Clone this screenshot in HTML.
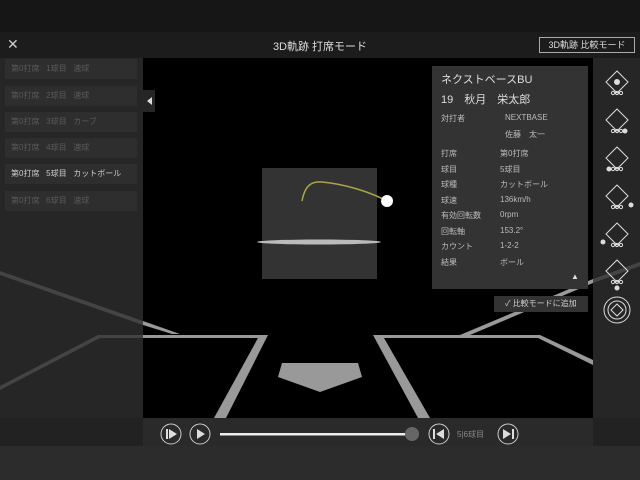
<!DOCTYPE html>
<html><head><meta charset="utf-8"><style>
*{margin:0;padding:0;box-sizing:border-box}
body{width:640px;height:480px;overflow:hidden;background:#222;font-family:"Liberation Sans","Noto Sans CJK JP",sans-serif;position:relative}
.abs{position:absolute}
.item{position:absolute;left:5px;width:132px;height:20px;background:#2e2e2e;color:#5a5a5a;font-size:8px;line-height:20px;padding-left:6px;white-space:pre}
.info div{position:absolute;font-size:8px;color:#bbb}
</style></head><body>
<div class="abs" style="left:0;top:0;width:640px;height:32px;background:#161616"></div>
<div class="abs" style="left:0;top:32px;width:640px;height:26px;background:#1c1c1c"></div>
<div class="abs" style="left:7px;top:36px;color:#ccc;font-size:14px">✕</div>
<div class="abs" style="left:0;top:38px;width:640px;text-align:center;color:#ddd;font-size:11px">3D軌跡 打席モード</div>
<div class="abs" style="left:539px;top:37px;width:96px;height:16px;border:1px solid #aaa;color:#ddd;font-size:9px;text-align:center;line-height:14px">3D軌跡 比較モード</div>
<div class="abs" style="left:0;top:58px;width:143px;height:360px;background:#262626"></div>
<div class="abs" style="left:143px;top:58px;width:450px;height:360px;background:#000"></div>
<div class="abs" style="left:593px;top:58px;width:47px;height:360px;background:#262626"></div>
<svg class="abs" style="left:0;top:0" width="640" height="480">
<polygon points="0,271 143,321 143,325 0,275" fill="#444"/>
<polygon points="143,321 180,334 172,334 143,325" fill="#999"/>
<polygon points="0,386 98,335 143,335 143,338 100,338 0,390" fill="#444"/>
<polygon points="143,335 268,335 226,418 214,418 258,338 143,338" fill="#999"/>
<polygon points="373,335 540,335 593,360 593,365 538,338 384,338 430,418 418,418" fill="#999"/>
<polygon points="460,335 593,279 593,283 470,335" fill="#999"/>
<polygon points="593,279 640,262 640,266 593,283" fill="#444"/>
<polygon points="282,363 358,363 362,377 320,392 278,377" fill="#999"/>
<rect x="262" y="168" width="115" height="111" fill="#333"/>
<ellipse cx="319" cy="242" rx="62" ry="2.5" fill="#bbb"/>
<path d="M302,201 C305,185 312,181 322,182 C345,184 370,192 387,201" stroke="#a9a64a" stroke-width="1.5" fill="none"/>
<circle cx="387" cy="201" r="6" fill="#fff"/>
<rect x="143" y="90" width="12" height="22" fill="#262626"/>
<polygon points="147,101 152,97 152,105" fill="#ddd"/>
</svg>
<div class="item" style="top:59px">第0打席   1球目   速球</div>
<div class="item" style="top:86px">第0打席   2球目   速球</div>
<div class="item" style="top:112px">第0打席   3球目   カーブ</div>
<div class="item" style="top:138px">第0打席   4球目   速球</div>
<div class="item" style="top:164px;color:#ccc">第0打席   5球目   カットボール</div>
<div class="item" style="top:191px">第0打席   6球目   速球</div>
<div class="abs info" style="left:432px;top:66px;width:156px;height:223px;background:#333">
<div style="left:9px;top:5px;font-size:11px;color:#ddd">ネクストベースBU</div>
<div style="left:9px;top:25px;font-size:11px;color:#ddd">19　秋月　栄太郎</div>
<div style="left:9px;top:47px">対打者</div><div style="left:73px;top:47px">NEXTBASE</div>
<div style="left:73px;top:63px">佐藤　太一</div>
<div style="left:9px;top:82px">打席</div><div style="left:68px;top:82px">第0打席</div>
<div style="left:9px;top:98px">球目</div><div style="left:68px;top:98px">5球目</div>
<div style="left:9px;top:113px">球種</div><div style="left:68px;top:113px">カットボール</div>
<div style="left:9px;top:129px">球速</div><div style="left:68px;top:129px">136km/h</div>
<div style="left:9px;top:144px">有効回転数</div><div style="left:68px;top:144px">0rpm</div>
<div style="left:9px;top:160px">回転軸</div><div style="left:68px;top:160px">153.2°</div>
<div style="left:9px;top:175px">カウント</div><div style="left:68px;top:175px">1-2-2</div>
<div style="left:9px;top:191px">結果</div><div style="left:68px;top:191px">ボール</div>
<div style="left:139px;top:206px;color:#ddd">▲</div>
</div>
<div class="abs" style="left:494px;top:296px;width:94px;height:16px;background:#333;color:#ccc;font-size:8px;line-height:16px;padding-left:11px">✓ 比較モードに追加</div>
<svg class="abs" style="left:593px;top:58px" width="47" height="360" fill="none" stroke="#ddd" stroke-width="1">
<g><path d="M24,13 L35,24 L24,35 L13,24 Z"/><circle cx="24" cy="24" r="2.5" fill="#ddd"/><circle cx="20" cy="35" r="1.6"/><circle cx="24" cy="35" r="1.6"/><circle cx="28" cy="35" r="1.6"/></g>
<g transform="translate(0,38)"><path d="M24,13 L35,24 L24,35 L13,24 Z"/><circle cx="20" cy="35" r="1.6"/><circle cx="24" cy="35" r="1.6"/><circle cx="28" cy="35" r="1.6"/><circle cx="32" cy="35" r="2" fill="#ddd"/></g>
<g transform="translate(0,76)"><path d="M24,13 L35,24 L24,35 L13,24 Z"/><circle cx="16" cy="35" r="2" fill="#ddd"/><circle cx="20" cy="35" r="1.6"/><circle cx="24" cy="35" r="1.6"/><circle cx="28" cy="35" r="1.6"/></g>
<g transform="translate(0,114)"><path d="M24,13 L35,24 L24,35 L13,24 Z"/><circle cx="20" cy="35" r="1.6"/><circle cx="24" cy="35" r="1.6"/><circle cx="28" cy="35" r="1.6"/><circle cx="38" cy="33" r="2" fill="#ddd"/></g>
<g transform="translate(0,152)"><path d="M24,13 L35,24 L24,35 L13,24 Z"/><circle cx="20" cy="35" r="1.6"/><circle cx="24" cy="35" r="1.6"/><circle cx="28" cy="35" r="1.6"/><circle cx="10" cy="32" r="2" fill="#ddd"/></g>
<g transform="translate(0,189)"><path d="M24,13 L35,24 L24,35 L13,24 Z"/><circle cx="20" cy="35" r="1.6"/><circle cx="24" cy="35" r="1.6"/><circle cx="28" cy="35" r="1.6"/><circle cx="24" cy="41" r="2" fill="#ddd"/></g>
<circle cx="24" cy="252" r="13"/><circle cx="24" cy="252" r="9"/><path d="M24,246 L30,252 L24,258 L18,252 Z"/>
</svg>
<div class="abs" style="left:143px;top:418px;width:450px;height:28px;background:#2a2a2a"></div>
<div class="abs" style="left:0;top:446px;width:640px;height:34px;background:#2c2c2c"></div>
<svg class="abs" style="left:0;top:0" width="640" height="480" fill="none" stroke="#ccc" stroke-width="1">
<circle cx="171" cy="434" r="10"/><rect x="166" y="429" width="2" height="10" fill="#ddd" stroke="none"/><polygon points="169,429 177,434 169,439" fill="#ddd" stroke="none"/>
<circle cx="200" cy="434" r="10"/><polygon points="197,429 205,434 197,439" fill="#ddd" stroke="none"/>
<rect x="220" y="433" width="192" height="2.5" fill="#eee" stroke="none"/>
<circle cx="412" cy="434" r="7" fill="#666" stroke="none"/>
<circle cx="439" cy="434" r="10"/><rect x="433" y="429" width="2" height="10" fill="#ddd" stroke="none"/><polygon points="444,429 436,434 444,439" fill="#ddd" stroke="none"/>
<circle cx="508" cy="434" r="10"/><rect x="512" y="429" width="2" height="10" fill="#ddd" stroke="none"/><polygon points="503,429 511,434 503,439" fill="#ddd" stroke="none"/>
</svg>
<div class="abs" style="left:457px;top:429px;color:#888;font-size:8px">5|6球目</div>
</body></html>
